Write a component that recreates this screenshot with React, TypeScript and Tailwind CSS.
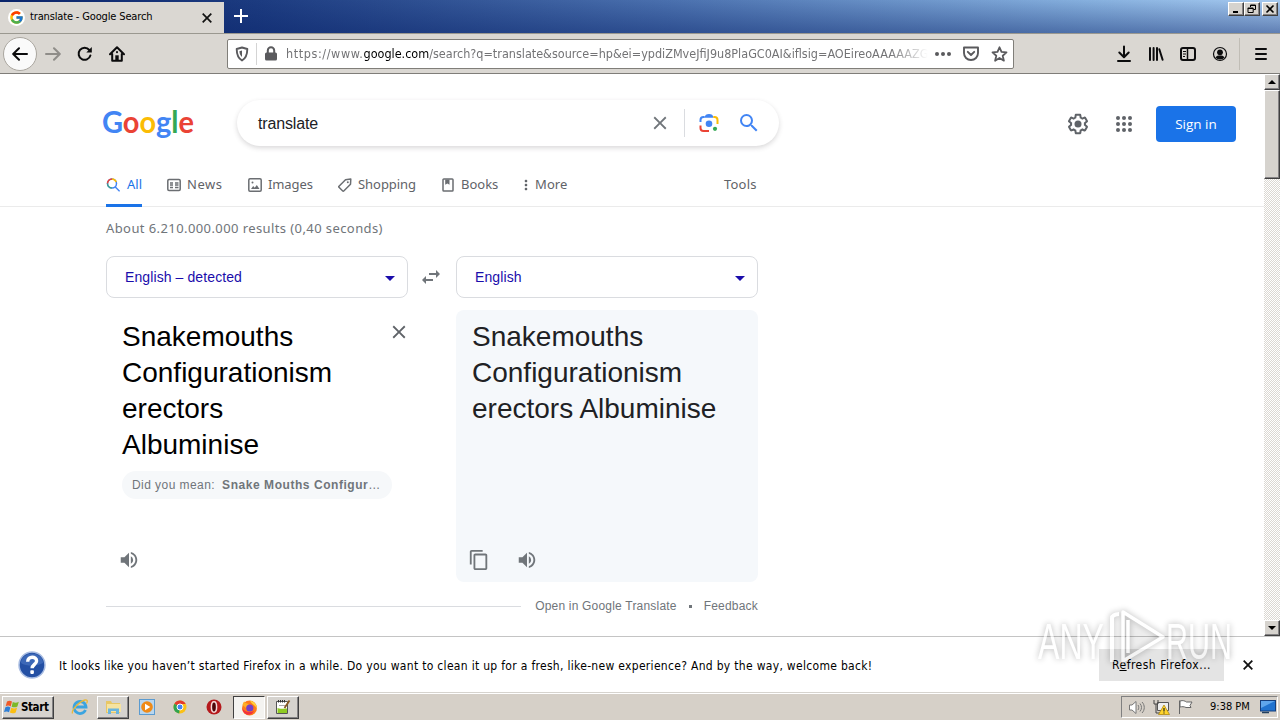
import type { ReactNode } from "react";
import {
  MdArrowDropDown,
  MdClose,
  MdContentCopy,
  MdMoreVert,
  MdSearch,
  MdSwapHoriz,
  MdVolumeUp,
} from "react-icons/md";
import { FcGoogle } from "react-icons/fc";

const ui = "font-['DejaVu_Sans_Condensed','DejaVu_Sans',sans-serif]";
const raised =
  "border border-t-white border-l-white border-r-[#404040] border-b-[#404040] bg-[#d6d3ce] shadow-[inset_-1px_-1px_0_#848284]";

const WindowButton = ({ children }: { children: ReactNode }) => (
  <div className={`flex h-[14px] w-4 items-center justify-center ${raised}`}>
    <svg width="10" height="10" viewBox="0 0 10 10" fill="none" stroke="#000">
      {children}
    </svg>
  </div>
);

const TitleBar = () => (
  <div className="flex h-[33px] shrink-0 bg-[linear-gradient(180deg,rgba(10,36,106,0)_0%,rgba(10,36,106,0.45)_100%),linear-gradient(90deg,#0a246a_0%,#1c3b80_20%,#4a70ae_52%,#86b0de_85%,#a6caf0_100%)]">
    <div className="mt-[2px] flex w-[224px] items-center bg-[#dad7d2] pl-2">
      <span className="flex size-[17px] items-center justify-center rounded-full bg-white">
        <FcGoogle size={15} />
      </span>
      <span className={`ml-[5px] text-[11px] tracking-[-0.15px] whitespace-nowrap text-black ${ui}`}>
        translate - Google Search
      </span>
      <svg className="mr-[12px] ml-auto" width="10" height="10" viewBox="0 0 10 10" stroke="#111" strokeWidth="1.7">
        <path d="M.7.7l8.6 8.6M9.3.7L.7 9.3" />
      </svg>
    </div>
    <svg className="mt-[9px] ml-[10px]" width="14" height="14" viewBox="0 0 14 14" stroke="#fff" strokeWidth="2">
      <path d="M7 0v14M0 7h14" />
    </svg>
    <div className="mt-[2px] mr-[2px] ml-auto flex">
      <WindowButton>
        <path d="M2 8h5" strokeWidth="2" />
      </WindowButton>
      <WindowButton>
        <path d="M3.5 3V1h5v4.5H6.5M.8 4h5.4v4.5H1V4M1 4.5h5M3.5 1.5h5" />
      </WindowButton>
      <div className="w-[2px]" />
      <WindowButton>
        <path d="M1.5 1.5l7 7M8.5 1.5l-7 7" strokeWidth="1.6" />
      </WindowButton>
    </div>
  </div>
);

const Toolbar = () => (
  <div className="flex h-[41px] shrink-0 items-center border-t border-b border-t-[#9a9890] border-b-[#7f7d79] bg-[#dad7d2]">
    <div className="ml-[3px] flex size-[34px] items-center justify-center rounded-full border border-[#aaa69f] bg-[#fafafa]">
      <svg width="16" height="16" viewBox="0 0 16 16" fill="none" stroke="#0c0c0d" strokeWidth="2" strokeLinecap="round" strokeLinejoin="round">
        <path d="M15 8H1.5M7 2.2L1.2 8 7 13.8" />
      </svg>
    </div>
    <svg className="ml-2" width="16" height="16" viewBox="0 0 16 16" fill="none" stroke="#8f8d89" strokeWidth="2" strokeLinecap="round" strokeLinejoin="round">
      <path d="M1 8h13.5M9 2.2L14.8 8 9 13.8" />
    </svg>
    <svg className="ml-[16px]" width="16" height="16" viewBox="0 0 16 16" fill="none" stroke="#0c0c0d" strokeWidth="2" strokeLinecap="round">
      <path d="M13.4 9.5A6 6 0 1 1 12.3 4" />
      <path d="M14.8 1v5.5H9.3z" fill="#0c0c0d" stroke="none" />
    </svg>
    <svg className="ml-[16px]" width="16" height="16" viewBox="0 0 16 16" fill="none" stroke="#0c0c0d" strokeWidth="2" strokeLinecap="round" strokeLinejoin="round">
      <path d="M1 8.3L8 1.3l7 7M3.2 8v6.7h9.6V8" />
      <path d="M6.3 14.5V9.3h3.4v5.2z" fill="#0c0c0d" stroke="none" />
      <path d="M8 6v.3" />
    </svg>

    {/* Address bar */}
    <div className="ml-[102px] flex h-[30px] w-[787px] items-center rounded-[2px] border border-[#807e79] bg-white">
      <svg className="ml-[6px]" width="16" height="16" viewBox="0 0 16 16" fill="none" stroke="#5a5a5d" strokeWidth="1.9">
        <path d="M8 1.5L13.3 3c0 5-1 9-5.3 11.5C3.7 12 2.7 8 2.7 3z" strokeLinejoin="round" />
        <path d="M8 4.5v6.5C6.3 9.5 5.5 7.5 5.4 5.2z" fill="#5a5a5d" stroke="none" />
      </svg>
      <div className="ml-[6px] h-[22px] w-px bg-[#d4d4d4]" />
      <svg className="ml-[6px]" width="16" height="16" viewBox="0 0 16 16" fill="none">
        <rect x="2" y="6.5" width="12" height="8" rx="1.5" fill="#5a5a5d" />
        <path d="M4.8 7V4.5a3.2 3.2 0 0 1 6.4 0V7" stroke="#5a5a5d" strokeWidth="2" />
      </svg>
      <div className={`ml-[7px] w-[642px] overflow-hidden pt-px text-[12.5px] tracking-[0px] whitespace-nowrap text-[#737375] [mask-image:linear-gradient(90deg,#000_94%,transparent_100%)] ${ui}`}>
        <span className="tracking-[0.6px]">https://www.</span>
        <span className="text-black">google.com</span>
        /search?q=translate&amp;source=hp&amp;ei=ypdiZMveJfiJ9u8PlaGC0AI&amp;iflsig=AOEireoAAAAAZG
      </div>
      <svg className="ml-[6px]" width="18" height="6" viewBox="0 0 18 6" fill="#5a5a5d">
        <circle cx="3" cy="3" r="2" />
        <circle cx="9" cy="3" r="2" />
        <circle cx="15" cy="3" r="2" />
      </svg>
      <svg className="ml-[10px]" width="18" height="16" viewBox="0 0 18 16" fill="none" stroke="#5a5a5d" strokeWidth="1.9" strokeLinejoin="round" strokeLinecap="round">
        <path d="M2 1.5h14V7c0 4-3 7-7 7s-7-3-7-7z" />
        <path d="M5.8 5.8L9 9l3.2-3.2" />
      </svg>
      <svg className="ml-[11px]" width="17" height="16" viewBox="0 0 17 16" fill="none" stroke="#5a5a5d" strokeWidth="1.8" strokeLinejoin="round">
        <path d="M8.5 1.3l2 4.6 5 .5-3.8 3.3 1.2 5-4.4-2.7-4.4 2.7 1.2-5L1.5 6.4l5-.5z" />
      </svg>
    </div>

    <div className="mr-[12px] ml-auto flex items-center">
      <svg width="16" height="18" viewBox="0 0 16 18" fill="none" stroke="#0c0c0d" strokeWidth="2" strokeLinecap="round" strokeLinejoin="round">
        <path d="M8 1.5v10.5M3.3 7.5L8 12.2l4.7-4.7M2 16h12" />
      </svg>
      <svg className="ml-4" width="16" height="16" viewBox="0 0 16 16" stroke="#0c0c0d" strokeWidth="2" strokeLinecap="round">
        <path d="M2 2v12M5.6 2v12M9 2v12M11.3 3.3l3.3 10.5" />
      </svg>
      <svg className="ml-4" width="16" height="16" viewBox="0 0 16 16" fill="none" stroke="#0c0c0d" strokeWidth="2">
        <rect x="1" y="2" width="14" height="12" rx="2" />
        <path d="M7.5 2v12" strokeWidth="1.5" />
        <path d="M3 5.5h3M3 8h3M3 10.5h2" strokeWidth="1" />
      </svg>
      <svg className="ml-4" width="16" height="16" viewBox="0 0 16 16" fill="#0c0c0d">
        <circle cx="8" cy="8" r="6.5" fill="none" stroke="#0c0c0d" strokeWidth="1.2" />
        <circle cx="8" cy="6.3" r="2.9" />
        <path d="M3.5 11.5C4.5 9.8 6 9.5 8 9.5s3.5.3 4.5 2A5.5 5.5 0 0 1 8 13.5a5.5 5.5 0 0 1-4.5-2z" />
      </svg>
      <div className="ml-[11px] h-[32px] w-px bg-[#c0bdb6]" />
      <svg className="ml-[14px]" width="14" height="14" viewBox="0 0 14 14" stroke="#0c0c0d" strokeWidth="2" strokeLinecap="round">
        <path d="M2 2h10M2 7h10M2 12h10" />
      </svg>
    </div>
  </div>
);

const GoogleLogo = () => (
  <svg className="shrink-0" width="92" height="46" viewBox="0 0 92 46">
    <text x="0" y="33" fontFamily="Lato, sans-serif" fontSize="31" fontWeight="700" textLength="92" lengthAdjust="spacingAndGlyphs">
      <tspan fill="#4285f4">G</tspan><tspan fill="#ea4335">o</tspan><tspan fill="#fbbc05">o</tspan><tspan fill="#4285f4">g</tspan><tspan fill="#34a853">l</tspan><tspan fill="#ea4335">e</tspan>
    </text>
  </svg>
);

const SearchHeader = () => (
  <div className="flex h-[46px] items-center pr-[28px] pl-[102px]">
    <GoogleLogo />
    <div className="ml-[43px] flex h-[46px] w-[542px] items-center rounded-full bg-white pl-[21px] shadow-[0_2px_5px_0px_rgba(64,60,67,0.2)]">
      <span className="pt-[2px] font-['Liberation_Sans',sans-serif] text-[16px] tracking-[-0.15px] text-[#202124]">translate</span>
      <MdClose className="ml-auto text-[#70757a]" size={22} />
      <div className="ml-[13px] h-[28px] w-px bg-[#dadce0]" />
      <svg className="ml-[14px]" width="20" height="20" viewBox="0 0 20 20" fill="none" strokeWidth="2">
        <path d="M1.5 9V7a3 3 0 0 1 3-3h1.2" stroke="#4285f4" />
        <path d="M5.5 4.8C6 2 7.3 1 10 1s4 1 4.500 3.800z" fill="#4285f4" />
        <path d="M14.3 4h1.2a3 3 0 0 1 3 3v4" stroke="#fbbc04" />
        <path d="M1.5 12.5V15a3 3 0 0 0 3 3H10" stroke="#ea4335" />
        <circle cx="10" cy="10.7" r="3.3" fill="#4285f4" />
        <circle cx="16" cy="15.8" r="2.1" fill="#34a853" />
      </svg>
      <MdSearch className="mr-[18px] ml-[18px] text-[#4285f4]" size={24} />
    </div>
    <svg className="mt-[2px] ml-auto" width="24" height="24" viewBox="0 0 24 24" fill="#5f6368">
      <path d="M13.850 22.250h-3.700c-.74 0-1.360-.54-1.450-1.270l-.27-1.890c-.27-.14-.53-.29-.79-.46l-1.800.72c-.7.260-1.470-.03-1.810-.65L2.200 15.530c-.35-.66-.2-1.440.36-1.880l1.530-1.190c-.01-.15-.02-.3-.02-.46 0-.15.010-.31.020-.46l-1.520-1.190c-.59-.45-.74-1.260-.37-1.880l1.850-3.190c.34-.62 1.110-.9 1.790-.63l1.810.73c.26-.17.52-.32.78-.46l.27-1.910c.09-.7.710-1.250 1.440-1.250h3.700c.74 0 1.360.54 1.450 1.270l.27 1.890c.27.14.53.29.79.46l1.800-.72c.71-.26 1.480.03 1.820.65l1.840 3.180c.36.66.2 1.440-.36 1.880l-1.520 1.190c.01.15.02.3.02.46s-.01.310-.02.460l1.520 1.190c.56.450.72 1.230.37 1.860l-1.860 3.220c-.34.62-1.110.9-1.800.63l-1.800-.72c-.26.170-.52.320-.78.460l-.27 1.910c-.1.680-.72 1.220-1.460 1.220zm-3.230-2h2.760l.37-2.550.53-.22c.44-.18.88-.44 1.340-.78l.45-.34 2.380.96 1.380-2.400-2.030-1.580.07-.56c.03-.26.06-.51.06-.78s-.03-.53-.06-.78l-.07-.56 2.030-1.580-1.390-2.400-2.390.96-.45-.35c-.42-.32-.87-.58-1.330-.77l-.52-.22-.37-2.550h-2.760l-.37 2.550-.53.21c-.44.19-.88.44-1.340.79l-.45.33-2.380-.95-1.390 2.390 2.030 1.580-.07.56a7 7 0 0 0-.06.79c0 .26.020.53.060.78l.07.56-2.030 1.580 1.380 2.400 2.390-.96.45.35c.43.33.860.58 1.330.77l.53.22.380 2.550z" />
      <circle cx="12" cy="12" r="3.5" />
    </svg>
    <svg className="mt-[2px] ml-[22px]" width="24" height="24" viewBox="0 0 24 24" fill="#5f6368">
      {[6, 12, 18].map((y) =>
        [6, 12, 18].map((x) => <circle key={`${x}-${y}`} cx={x} cy={y} r="2" />)
      )}
    </svg>
    <button className="mt-[2px] ml-[20px] h-9 w-20 rounded-[4px] bg-[#1a73e8] font-['Open_Sans',sans-serif] text-[13.5px] tracking-[0px] text-white">
      Sign in
    </button>
  </div>
);

const TabIcon = ({ children }: { children: ReactNode }) => (
  <svg className="mt-px" width="14" height="14" viewBox="0 0 14 14" fill="none" stroke="#6b6e72" strokeWidth="1.5">
    {children}
  </svg>
);

const Tabs = () => (
  <div className="mt-4 flex h-[45px] border-b border-[#ebebeb] pl-[106px] font-['Noto_Sans',sans-serif] text-[13px] text-[#5f6368]">
    <div className="flex h-[45px] w-9 items-center justify-between border-b-[3px] border-[#1a73e8] pt-[3px] text-[#1a73e8]">
      <TabIcon>
        <circle cx="6" cy="5.5" r="4.5" stroke="#4285f4" />
        <path d="M1.5 5.5A4.500 4.500 0 0 1 6 1" stroke="#ea4335" />
        <path d="M6 1a4.500 4.500 0 0 1 4.200 3" stroke="#fbbc04" />
        <path d="M1.5 5.5A4.500 4.500 0 0 0 6 10" stroke="#34a853" opacity=".6" />
        <path d="M9.3 9l4.300 4.300" stroke="#4285f4" />
      </TabIcon>
      All
    </div>
    <div className="flex h-[42px] items-center pt-[3px]">
      <div className="ml-[25px] flex w-[81px] items-center gap-[6px] tracking-[0.5px]">
        <TabIcon>
          <rect x=".8" y="1.5" width="12.4" height="11" rx="1.2" />
          <path d="M3 5h3M3 7h3M3 9.5h3M8 5h3.5M8 7h3.5M8 9.5h3.5" />
        </TabIcon>
        News
      </div>
      <div className="flex w-[90px] items-center gap-[6px] tracking-[-0.1px]">
        <TabIcon>
          <rect x=".8" y=".8" width="12.4" height="12.4" rx="1.2" />
          <path d="M3 11l2.200-3 1.500 1.700L8.800 7l2.700 4z" fill="#6b6e72" stroke="none" />
          <circle cx="4.5" cy="4.5" r="1" fill="#6b6e72" stroke="none" />
        </TabIcon>
        Images
      </div>
      <div className="flex w-[103px] items-center gap-[6px] tracking-[-0.05px]">
        <TabIcon>
          <path d="M1 8.200L7.500 1.700 12.800 1 12.500 6.300 6 12.800c-.5.500-1 .5-1.500 0L1 9.300c-.4-.4-.4-.7 0-1.100z" strokeLinejoin="round" />
          <circle cx="9.8" cy="4.3" r="1" fill="#6b6e72" stroke="none" />
        </TabIcon>
        Shopping
      </div>
      <div className="flex w-[77px] items-center gap-[6px]">
        <TabIcon>
          <rect x="2" y="1" width="10" height="12" rx=".8" />
          <path d="M4.200 1.500h4.300v5.300L6.350 5.400 4.200 6.800z" fill="#6b6e72" stroke="none" />
        </TabIcon>
        Books
      </div>
      <div className="flex w-[44px] items-center">
        <MdMoreVert size={16} className="mt-px shrink-0 text-[#5f6368]" />
        <span className="ml-px tracking-[0.1px]">More</span>
      </div>
      <span className="ml-[162px] tracking-[0.2px]">Tools</span>
    </div>
  </div>
);

const LanguageSelect = ({ label }: { label: string }) => (
  <div className="flex h-[42px] w-[302px] items-center justify-between rounded-lg border border-[#dadce0] pr-[5px] pl-[18px] text-[14px] tracking-[0.1px] text-[#1a0dab]">
    {label}
    <MdArrowDropDown className="mt-px" size={24} />
  </div>
);

const Translator = () => (
  <div className="ml-[106px] w-[652px] font-['Liberation_Sans',sans-serif]">
    <p className="mt-[11px] font-['Noto_Sans',sans-serif] text-[13px] leading-[20px] tracking-[0.41px] text-[#70757a]">
      About 6.210.000.000 results (0,40 seconds)
    </p>
    <div className="mt-[18px] flex items-center justify-between">
      <LanguageSelect label="English – detected" />
      <MdSwapHoriz size={24} className="mr-[2px] text-[#70757a]" />
      <LanguageSelect label="English" />
    </div>
    <div className="mt-[12px] flex h-[272px] justify-between">
      <div className="flex w-[302px] flex-col pl-4">
        <div className="flex justify-between pt-[9px]">
          <p className="w-[240px] text-[28px] leading-9 text-black">
            Snakemouths Configurationism erectors Albuminise
          </p>
          <MdClose className="mt-[2px] -mr-[2px] text-[#5f6368]" size={22} />
        </div>
        <div className="mt-[8px] flex h-7 w-[270px] items-center rounded-full bg-[#f6f8fa] pl-[10px] text-[12px] tracking-[0.44px] whitespace-nowrap text-[#70757a]">
          Did you mean:<b className="ml-[7px] tracking-[0.55px]">Snake Mouths Configur</b>…
        </div>
        <MdVolumeUp className="mt-auto mb-[11px] -ml-[4px] text-[#70757a]" size={22} />
      </div>
      <div className="flex w-[302px] flex-col rounded-lg bg-[#f5f8fb] px-4 pt-[9px] pb-[11px]">
        <p className="text-[28px] leading-9 text-[#202124]">
          Snakemouths Configurationism erectors Albuminise
        </p>
        <div className="mt-auto -ml-[4px] flex gap-[26px] text-[#70757a]">
          <MdContentCopy size={22} />
          <MdVolumeUp size={22} />
        </div>
      </div>
    </div>
    <div className="mt-[15px] flex items-center text-[12px] leading-[18px] tracking-[0.2px] whitespace-nowrap text-[#70757a]">
      <div className="mr-[14px] h-px flex-1 bg-[#dadce0]" />
      Open in Google Translate
      <span className="mx-3 size-[3px] bg-[#70757a]" />
      Feedback
    </div>
  </div>
);

const ScrollArrow = ({ d }: { d: string }) => (
  <div className={`flex h-4 w-4 shrink-0 items-center justify-center ${raised}`}>
    <svg width="8" height="4" viewBox="0 0 8 4">
      <path d={d} />
    </svg>
  </div>
);

const ScrollBar = () => (
  <div className="flex w-4 shrink-0 flex-col bg-[#e9e7e3] bg-[repeating-conic-gradient(#dbd8d2_0_25%,#fff_0_50%)] bg-[length:2px_2px]">
    <ScrollArrow d="M4 0l4 4H0z" />
    <div className={`h-[89px] ${raised}`} />
    <div className="flex-1" />
    <ScrollArrow d="M0 0h8L4 4z" />
  </div>
);

const NotificationBar = () => (
  <div className={`flex h-[56px] shrink-0 items-center border-t border-[#c4c4c4] bg-white text-[12px] text-black ${ui}`}>
    <svg className="ml-[18px]" width="28" height="28" viewBox="0 0 28 28">
      <circle cx="14" cy="14" r="13" fill="#2450a4" stroke="#a9bde2" strokeWidth="1.5" />
      <path d="M3 12a11 9.5 0 0 1 22 0c-5 3-16 4-22 0z" fill="#4d78c4" opacity=".6" />
      <path d="M9.7 10.7C9.7 4.8 18.6 5 18.6 10c0 3.3-4.5 3.6-4.5 7.3" fill="none" stroke="#fff" strokeWidth="3.4" />
      <rect x="12.3" y="19.3" width="3.6" height="3.6" rx=".8" fill="#fff" />
    </svg>
    <span className="ml-[13px] pt-[2px] tracking-[0.305px] whitespace-nowrap">
      It looks like you haven’t started Firefox in a while. Do you want to clean it up for a fresh, like-new experience? And by the way, welcome back!
    </span>
    <button className="ml-auto h-8 w-[125px] bg-[#e4e4e4] tracking-[0.5px]">
      R<u>e</u>fresh Firefox...
    </button>
    <svg className="mr-[27px] ml-[19px]" width="10" height="10" viewBox="0 0 10 10" stroke="#111" strokeWidth="1.8">
      <path d="M.7.7l8.6 8.6M9.3.7L.7 9.3" />
    </svg>
  </div>
);

const Watermark = () => (
  <svg
    className="pointer-events-none absolute top-[602px] left-[1030px] drop-shadow-[0_0_3px_rgba(0,0,0,0.5)]"
    width="212"
    height="74"
    viewBox="0 0 212 74"
    fill="#fff"
    opacity=".6"
  >
    <g fontFamily="Liberation Sans, sans-serif" fontSize="50">
      <text x="8" y="57" textLength="66" lengthAdjust="spacingAndGlyphs">ANY</text>
      <text x="136" y="57" textLength="66" lengthAdjust="spacingAndGlyphs">RUN</text>
    </g>
    <path d="M82 60V16c0-2 3-4 7-4" fill="none" stroke="#fff" strokeWidth="4" />
    <path d="M93 10l40 25-40 24zM98 18v33" fill="#000" fillOpacity=".08" stroke="#fff" strokeWidth="3.5" strokeLinejoin="round" />
  </svg>
);

const TaskButton = ({ children, active }: { children: ReactNode; active?: boolean }) => (
  <div
    className={`flex h-[23px] w-8 items-center justify-center ${
      active ? "border border-t-[#404040] border-r-white border-b-white border-l-[#404040] bg-[#f4f3f0]" : raised
    }`}
  >
    {children}
  </div>
);

const TaskBar = () => (
  <div className={`flex h-7 shrink-0 items-center border-t border-[#d6d3ce] bg-[#d6d0c8] pt-px text-black shadow-[inset_0_1px_0_#fff] ${ui}`}>
    <div className={`ml-[2px] flex h-[23px] w-[52px] items-center pl-px text-[11.5px] font-bold tracking-[-0.4px] ${raised}`}>
      <svg className="mr-px" width="16" height="16" viewBox="0 0 16 16">
        <path d="M3 2.500c2-1.300 3.500-1 5 0L6.700 7.400C5 6.300 3.500 6.300 1.700 7.200z" fill="#f05a28" />
        <path d="M8.800 3c2 1 3.800 1 6-.3L13.400 7.500c-2 1.200-4 1-5.800.2z" fill="#7cb928" />
        <path d="M1.400 8.200c2-1 3.500-.8 5 .2L5 13.200C3.500 12.200 2 12.200 0 13z" fill="#2f7fd6" />
        <path d="M7.300 8.800c2 1 3.800 1 5.800-.2l-1.400 4.800c-2 1.200-4 1-5.800.2z" fill="#fbbf12" />
      </svg>
      <span className="pt-px">Start</span>
    </div>
    <svg className="ml-[17px]" width="18" height="18" viewBox="0 0 18 18" fill="none">
      <path d="M14.5 12A6 6 0 1 1 15 9H5" stroke="#3ba4e0" strokeWidth="2.8" />
      <path d="M1.5 15.5C0 12 9 3 14 2c3-.6 2.500 2 1.500 3.500" stroke="#e9b93a" strokeWidth="1.3" />
    </svg>
    <div className="ml-[8px]">
      <TaskButton>
        <svg width="17" height="16" viewBox="0 0 17 16">
          <path d="M1 2h5l1 2h8v10H1z" fill="#e8c765" />
          <path d="M2 5h14v8H2z" fill="#f6e3a0" />
          <path d="M3 15V9.5h11V15h-3v-3H6v3z" fill="#6bb5dd" />
        </svg>
      </TaskButton>
    </div>
    <svg className="ml-[10px]" width="16" height="16" viewBox="0 0 16 16">
      <rect x=".5" y=".5" width="15" height="15" fill="#b9d6ee" stroke="#5b9bd0" />
      <circle cx="8" cy="8" r="5.8" fill="#ef8a17" />
      <path d="M6 4.7l5.3 3.3L6 11.300z" fill="#fff" />
    </svg>
    <svg className="ml-[17px]" width="16" height="16" viewBox="0 0 16 16">
      <circle cx="8" cy="8" r="6.5" fill="#fbc116" />
      <path d="M8 8L2.4 4.7A6.500 6.500 0 0 1 13.700 5H8z" fill="#e33b2e" />
      <path d="M8 8l-.8 6.500A6.500 6.500 0 0 1 2.400 4.700z" fill="#31a350" />
      <circle cx="8" cy="8" r="3" fill="#4285f4" stroke="#fff" />
    </svg>
    <svg className="ml-[18px]" width="16" height="16" viewBox="0 0 16 16">
      <circle cx="8" cy="8" r="7.5" fill="#b5191c" />
      <ellipse cx="8" cy="8" rx="2.6" ry="5.2" fill="#4d0507" stroke="#f5dada" strokeWidth="1.5" />
    </svg>
    <div className="ml-[11px] flex gap-[2px]">
      <TaskButton active>
        <svg width="17" height="17" viewBox="0 0 17 17">
          <circle cx="8.5" cy="9" r="7.5" fill="#ff7a1a" />
          <path d="M9 1.5c4 1 7.5 4.5 6.8 8.500-2-5-5-4-6.800-8.500z" fill="#ffd43a" />
          <path d="M1.5 6C2 4 2.5 3 3.300 2.500 4.500 4.500 6 4.500 8 5L5 9z" fill="#ffae25" />
          <circle cx="8.8" cy="9" r="3.6" fill="#7440c8" />
          <path d="M1.2 9c2 4 8 5.5 12 2.500-2 6-11 6-12-2.500z" fill="#f2323f" />
        </svg>
      </TaskButton>
      <TaskButton>
        <svg width="16" height="16" viewBox="0 0 16 16">
          <path d="M1.5 2.5h11v12h-11z" fill="#fff" stroke="#555" />
          <path d="M3.5 1v2.5M5.5 1v2.5M7.5 1v2.5M9.5 1v2.5" stroke="#333" />
          <path d="M4 6.5h7" stroke="#aaa" />
          <path d="M2.5 14V9c3 1.5 6 0 9.5.5V14z" fill="#8fcb22" />
          <path d="M14.5 1.5L9.5 9" stroke="#8a5a22" strokeWidth="1.8" />
        </svg>
      </TaskButton>
    </div>

    {/* System tray */}
    <div className="mr-[2px] ml-auto flex h-[22px] w-[157px] items-center border border-t-[#808080] border-r-white border-b-white border-l-[#808080] pl-[7px] text-[11px] whitespace-nowrap">
      <svg width="17" height="15" viewBox="0 0 17 15" fill="none" stroke="#777" strokeWidth="1">
        <path d="M.5 5h2.5l4-3.5v12L3 10H.5z" fill="#fff" />
        <path d="M9 5c1 1.5 1 3.5 0 5M11 3.5c2 2.5 2 5.5 0 8M13 2c3 3 3 8 0 11" />
      </svg>
      <svg className="ml-[7px]" width="17" height="16" viewBox="0 0 17 16">
        <path d="M4.5 3.5h11v8h-11z" fill="#eee" stroke="#555" />
        <path d="M1 1v4h4V1M3 5v9h4" fill="none" stroke="#444" />
        <path d="M11 6l5.5 9.5h-11z" fill="#ffd42a" stroke="#a98000" strokeWidth=".7" />
        <path d="M11 9v3.5M11 13.5v1" stroke="#222" strokeWidth="1.2" />
      </svg>
      <svg className="ml-[7px]" width="17" height="16" viewBox="0 0 17 16" fill="#fff" stroke="#666">
        <path d="M2.5 15V1.5M3 2c3-1 5 0 6.5 1h5.5l-2 3.500 1 2H9C7 7.500 5 7.500 3 8z" />
      </svg>
      <span className="ml-[16px] pt-px">9:38 PM</span>
      <svg className="ml-[10px]" width="16" height="14" viewBox="0 0 16 14">
        <rect x=".5" y=".5" width="15" height="10.5" fill="#2173cf" stroke="#153e7c" />
        <path d="M1 1h14L1 8z" fill="#5fa6ec" />
        <path d="M2 12.5h7" stroke="#23405f" strokeWidth="1.5" />
      </svg>
    </div>
  </div>
);

const App = () => {
  return (
    <div className="relative flex h-[720px] w-[1280px] flex-col overflow-hidden bg-white">
      <TitleBar />
      <Toolbar />
      <div className="flex min-h-0 flex-1">
        <div className="min-w-0 flex-1 overflow-hidden pt-[26px]">
          <SearchHeader />
          <Tabs />
          <Translator />
        </div>
        <ScrollBar />
      </div>
      <NotificationBar />
      <TaskBar />
      <Watermark />
    </div>
  );
};

export default App;
